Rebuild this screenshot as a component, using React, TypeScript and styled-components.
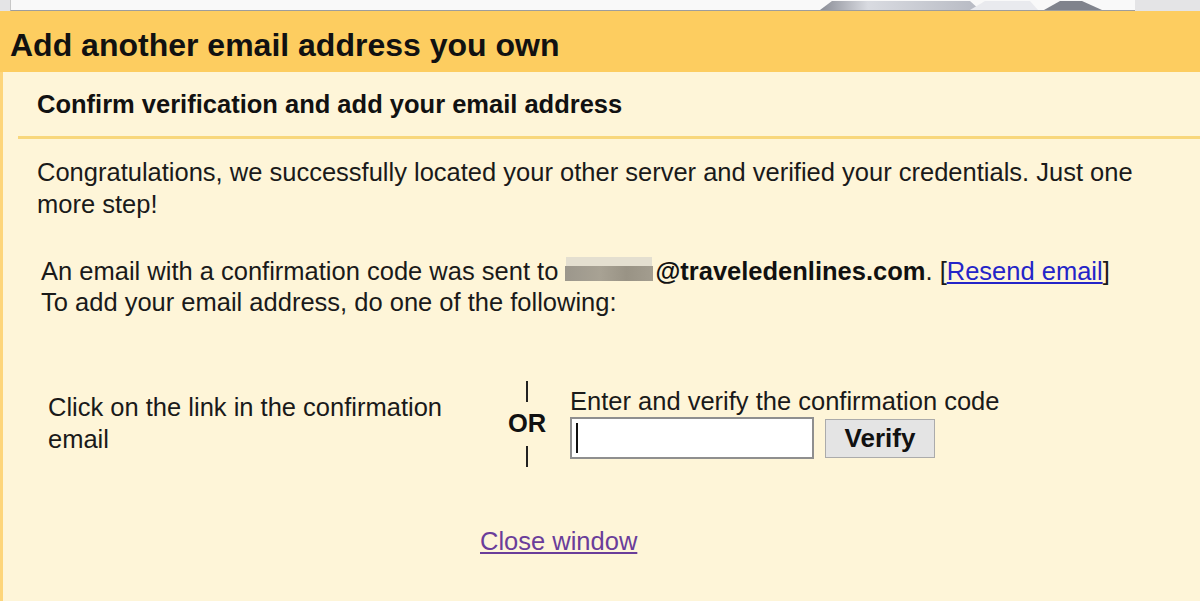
import React from 'react';
import styled, { createGlobalStyle } from 'styled-components';

const GlobalStyle = createGlobalStyle`
	html, body {
		margin: 0;
		padding: 0;
		width: 1200px;
		height: 601px;
		overflow: hidden;
		background: #fef5d8;
		font-family: Arial, 'Liberation Sans', sans-serif;
	}
`;

const App = () => {
	return (
		<Page>
			<GlobalStyle />
			<Chrome>
				<ChromeField>
					<ChromeShapes width='300' height='10' viewBox='0 0 300 10'>
						<defs>
							<linearGradient id='tabA' x1='0' x2='1'>
								<stop offset='0' stopColor='#8a8d96' />
								<stop offset='0.3' stopColor='#d9dbe1' />
								<stop offset='1' stopColor='#b7bac3' />
							</linearGradient>
						</defs>
						<path d='M0 10 L12 1 L150 1 L160 10 Z' fill='url(#tabA)' />
						<path d='M150 10 L165 1 L210 1 L218 10 Z' fill='#e9eaee' />
						<path d='M224 10 L240 1 L262 1 L282 10 Z' fill='#80838c' />
					</ChromeShapes>
				</ChromeField>
			</Chrome>
			<Header>
				<Title>Add another email address you own</Title>
			</Header>
			<Body>
				<Subtitle>Confirm verification and add your email address</Subtitle>
				<Divider />
				<Intro>
					Congratulations, we successfully located your other server and
					verified your credentials. Just one more step!
				</Intro>
				<Notice>
					An email with a confirmation code was sent to <Blur />
					<Email>@traveledenlines.com</Email>. [
					<BlueLink href='#'>Resend email</BlueLink>]
					<br />
					To add your email address, do one of the following:
				</Notice>
				<Options>
					<LinkOption>Click on the link in the confirmation email</LinkOption>
					<OrColumn>
						<Bar />
						<Or>OR</Or>
						<Bar />
					</OrColumn>
					<CodeOption>
						<CodeLabel>Enter and verify the confirmation code</CodeLabel>
						<CodeRow>
							<CodeInput>
								<Caret />
							</CodeInput>
							<VerifyButton>Verify</VerifyButton>
						</CodeRow>
					</CodeOption>
				</Options>
				<Footer>
					<CloseLink href='#'>Close window</CloseLink>
				</Footer>
			</Body>
		</Page>
	);
};

export default App;

const Page = styled.div`
	display: flex;
	flex-direction: column;
	width: 1200px;
	height: 601px;
	background: #fef5d8;
	color: #1a1a1a;
	font-size: 25.5px;
`;

const Chrome = styled.div`
	height: 11px;
	display: flex;
	background: #e4e4e6;
	padding: 0 65px 0 10px;
`;

const ChromeField = styled.div`
	flex: 1;
	display: flex;
	justify-content: flex-end;
	background: #f9f9f9;
	border-bottom: 1px solid #9d9d9d;
	border-left: 1px solid #c8c8c8;
	padding-right: 15px;
`;

const ChromeShapes = styled.svg`
	display: block;
`;

const Header = styled.div`
	height: 61px;
	background: #fdcd60;
	display: flex;
	align-items: center;
	padding: 8px 0 0 10px;
	box-sizing: border-box;
`;

const Title = styled.h1`
	margin: 0;
	font-size: 32px;
	font-weight: bold;
	color: #111;
`;

const Body = styled.div`
	flex: 1;
	border-left: 3px solid #fdd57a;
	padding: 0 0 0 15px;
	display: flex;
	flex-direction: column;
`;

const Subtitle = styled.h2`
	margin: 17px 0 0 19px;
	font-size: 25.5px;
	font-weight: bold;
	color: #111;
	line-height: 30px;
`;

const Divider = styled.div`
	height: 3px;
	background: #f8d77c;
	margin-top: 17px;
`;

const Intro = styled.p`
	margin: 17px 50px 0 19px;
	line-height: 32px;
`;

const Notice = styled.p`
	margin: 36px 0 0 23px;
	line-height: 31px;
`;

const Blur = styled.span`
	display: inline-block;
	width: 88px;
	height: 15px;
	margin-right: 2px;
	vertical-align: -1px;
	background: linear-gradient(90deg, #9c978c, #a8a294 40%, #999385 70%, #a39d8f);
	box-shadow: 0 -10px 0 -1px #e4dfd0;
`;

const Email = styled.b`
	color: #111;
`;

const BlueLink = styled.a`
	color: #2424c8;
	text-decoration: underline;
`;

const Options = styled.div`
	display: flex;
	align-items: flex-start;
	margin-top: 63px;
`;

const LinkOption = styled.div`
	width: 420px;
	margin: 10px 0 0 30px;
	line-height: 32px;
`;

const OrColumn = styled.div`
	display: flex;
	flex-direction: column;
	align-items: center;
	width: 44px;
	margin-left: 37px;
`;

const Bar = styled.div`
	width: 2px;
	height: 21px;
	background: #222;
`;

const Or = styled.span`
	font-weight: bold;
	line-height: 26px;
	margin: 8px 0 10px;
	color: #111;
`;

const CodeOption = styled.div`
	display: flex;
	flex-direction: column;
	margin-left: 21px;
`;

const CodeLabel = styled.div`
	line-height: 28px;
	margin-top: 6px;
`;

const CodeRow = styled.div`
	display: flex;
	align-items: center;
	gap: 11px;
	margin-top: 2px;
`;

const CodeInput = styled.div`
	width: 236px;
	height: 38px;
	background: #fff;
	border: 2px solid #8f8f8f;
	display: flex;
	align-items: center;
	padding-left: 4px;
	box-sizing: content-box;
`;

const Caret = styled.span`
	width: 2px;
	height: 30px;
	background: #111;
`;

const VerifyButton = styled.button`
	width: 110px;
	height: 39px;
	background: #e4e4e4;
	border: 1px solid #ababab;
	font-family: Arial, 'Liberation Sans', sans-serif;
	font-size: 26px;
	font-weight: bold;
	color: #111;
	padding: 0;
`;

const Footer = styled.div`
	display: flex;
	margin-top: 60px;
	padding-left: 462px;
`;

const CloseLink = styled.a`
	line-height: 29px;
	color: #6a3d9a;
	text-decoration: underline;
`;
